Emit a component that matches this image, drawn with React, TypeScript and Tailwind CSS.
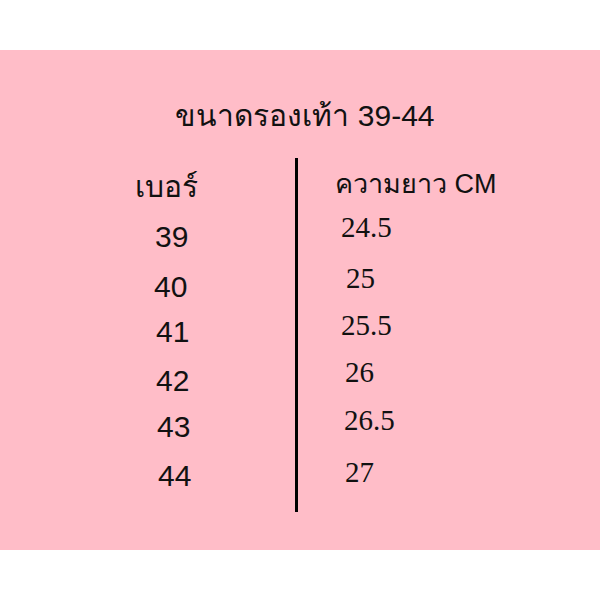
export default function App() {
  const sans = { fontFamily: "'Liberation Sans', 'Noto Sans', sans-serif" };
  const serif = { fontFamily: "'Liberation Serif', serif" };

  const sizes = [
    { no: '39', mt: 'mt-[20px]', ml: 'ml-[20px]' },
    { no: '40', mt: 'mt-[20px]', ml: 'ml-[19px]' },
    { no: '41', mt: 'mt-[15px]', ml: 'ml-[21px]' },
    { no: '42', mt: 'mt-[19px]', ml: 'ml-[21px]' },
    { no: '43', mt: 'mt-[16px]', ml: 'ml-[22px]' },
    { no: '44', mt: 'mt-[19px]', ml: 'ml-[23px]' },
  ];

  const lengths = [
    { cm: '24.5', mt: 'mt-[13px]', ml: 'ml-[6px]' },
    { cm: '25', mt: 'mt-[21px]', ml: 'ml-[11px]' },
    { cm: '25.5', mt: 'mt-[17px]', ml: 'ml-[6px]' },
    { cm: '26', mt: 'mt-[17px]', ml: 'ml-[10px]' },
    { cm: '26.5', mt: 'mt-[18px]', ml: 'ml-[9px]' },
    { cm: '27', mt: 'mt-[22px]', ml: 'ml-[10px]' },
  ];

  return (
    <div className="w-[600px] h-[600px] bg-white pt-[50px]" style={sans}>
      <div className="h-[500px] bg-[#FFBDC8] text-[#111]">
        {/* Title */}
        <div className="pt-[51px] pl-[10px] flex justify-center text-[30px] leading-[30px]">
          ขนาดรองเท้า 39-44
        </div>

        {/* Table */}
        <div className="mt-[27px] flex">
          <div className="w-[295px] pl-[135px] pt-[14px] flex flex-col items-start text-[30px] leading-[30px]">
            <div>เบอร์</div>
            {sizes.map((s) => (
              <div key={s.no} className={`${s.mt} ${s.ml}`}>
                {s.no}
              </div>
            ))}
          </div>

          <div className="w-[3px] h-[354px] bg-black" />

          <div className="pl-[37px] pt-[11px] flex flex-col items-start">
            <div className="text-[27px] leading-[30px]">ความยาว CM</div>
            {lengths.map((l) => (
              <div key={l.cm} className={`${l.mt} ${l.ml} text-[29px] leading-[30px]`} style={serif}>
                {l.cm}
              </div>
            ))}
          </div>
        </div>
      </div>
    </div>
  );
}
